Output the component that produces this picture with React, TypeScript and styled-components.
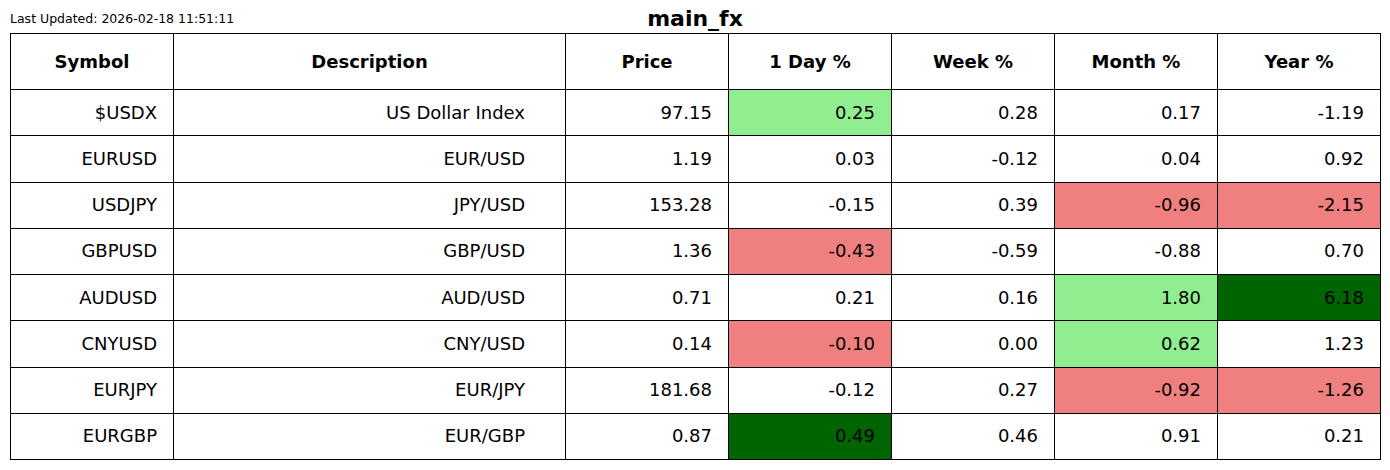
import styled, { createGlobalStyle } from 'styled-components';

const GlobalStyle = createGlobalStyle`
    html, body {
        margin: 0;
        padding: 0;
        background: #ffffff;
        font-family: "DejaVu Sans", "Liberation Sans", sans-serif;
        color: #000000;
    }
`;

type Tone = 'none' | 'up' | 'down' | 'strong';

type Row = {
    symbol: string;
    description: string;
    price: string;
    values: { text: string; tone: Tone }[];
};

const cell = (text: string, tone: Tone = 'none') => ({ text, tone });

const rows: Row[] = [
    { symbol: '$USDX', description: 'US Dollar Index', price: '97.15', values: [cell('0.25', 'up'), cell('0.28'), cell('0.17'), cell('-1.19')] },
    { symbol: 'EURUSD', description: 'EUR/USD', price: '1.19', values: [cell('0.03'), cell('-0.12'), cell('0.04'), cell('0.92')] },
    { symbol: 'USDJPY', description: 'JPY/USD', price: '153.28', values: [cell('-0.15'), cell('0.39'), cell('-0.96', 'down'), cell('-2.15', 'down')] },
    { symbol: 'GBPUSD', description: 'GBP/USD', price: '1.36', values: [cell('-0.43', 'down'), cell('-0.59'), cell('-0.88'), cell('0.70')] },
    { symbol: 'AUDUSD', description: 'AUD/USD', price: '0.71', values: [cell('0.21'), cell('0.16'), cell('1.80', 'up'), cell('6.18', 'strong')] },
    { symbol: 'CNYUSD', description: 'CNY/USD', price: '0.14', values: [cell('-0.10', 'down'), cell('0.00'), cell('0.62', 'up'), cell('1.23')] },
    { symbol: 'EURJPY', description: 'EUR/JPY', price: '181.68', values: [cell('-0.12'), cell('0.27'), cell('-0.92', 'down'), cell('-1.26', 'down')] },
    { symbol: 'EURGBP', description: 'EUR/GBP', price: '0.87', values: [cell('0.49', 'strong'), cell('0.46'), cell('0.91'), cell('0.21')] },
];

const headers = ['Symbol', 'Description', 'Price', '1 Day %', 'Week %', 'Month %', 'Year %'];

const toneColors: Record<Tone, string> = {
    none: '#ffffff',
    up: '#90ee90',
    down: '#f08080',
    strong: '#006400',
};

const App = () => {
    return (
        <>
            <GlobalStyle />
            <Page>
                <TopBar>
                    <Updated>Last Updated: 2026-02-18 11:51:11</Updated>
                    <Title>main_fx</Title>
                    <span />
                </TopBar>
                <Table>
                    <colgroup>
                        {headers.map((h) => (
                            <Col key={h} $wide={h === 'Description'} />
                        ))}
                    </colgroup>
                    <thead>
                        <tr>
                            {headers.map((h) => (
                                <HeadCell key={h}>{h}</HeadCell>
                            ))}
                        </tr>
                    </thead>
                    <tbody>
                        {rows.map((r) => (
                            <tr key={r.symbol}>
                                <Cell>{r.symbol}</Cell>
                                <Cell $wide>{r.description}</Cell>
                                <Cell>{r.price}</Cell>
                                {r.values.map((v, i) => (
                                    <Cell key={i} $tone={v.tone}>{v.text}</Cell>
                                ))}
                            </tr>
                        ))}
                    </tbody>
                </Table>
            </Page>
        </>
    );
};

export default App;

const Page = styled.div`
    width: 1370px;
    padding: 0 10px;
`;

const TopBar = styled.div`
    display: grid;
    grid-template-columns: 1fr auto 1fr;
    align-items: center;
    height: 33px;
`;

const Updated = styled.span`
    font-size: 12.5px;
    white-space: nowrap;
    margin-top: 3px;
`;

const Title = styled.h1`
    margin: 0;
    font-size: 22px;
    font-weight: bold;
    margin-top: 4px;
`;

const Table = styled.table`
    width: 1370px;
    table-layout: fixed;
    border-collapse: collapse;
    font-size: 18px;
`;

const Col = styled.col<{ $wide?: boolean }>`
    width: ${(p) => (p.$wide ? '392px' : '163px')};
`;

const HeadCell = styled.th`
    height: 56px;
    box-sizing: border-box;
    padding: 0 0 1px 0;
    border: 1px solid #000;
    font-weight: bold;
    text-align: center;
    vertical-align: middle;
`;

const Cell = styled.td<{ $tone?: Tone; $wide?: boolean }>`
    height: 46.25px;
    box-sizing: border-box;
    padding: 0 ${(p) => (p.$wide ? '40px' : '16px')} 1px 0;
    border: 1px solid #000;
    text-align: right;
    vertical-align: middle;
    background: ${(p) => toneColors[p.$tone ?? 'none']};
    white-space: nowrap;
`;
